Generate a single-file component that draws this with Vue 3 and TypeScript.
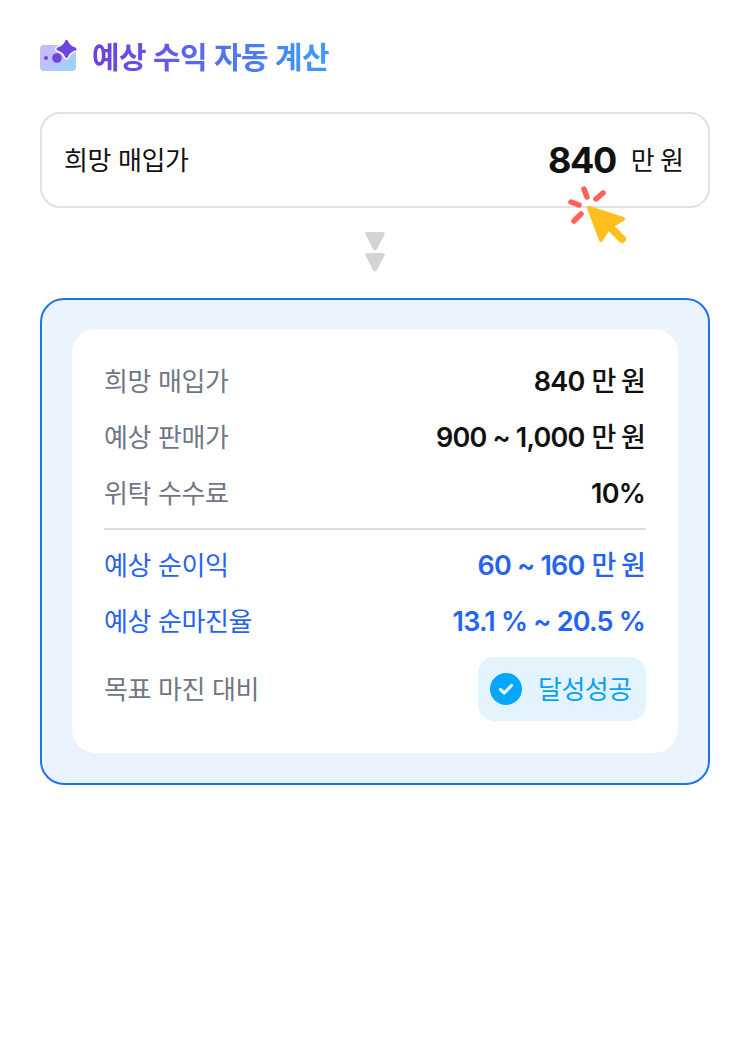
<script setup lang="ts">
interface Row { label: string; num: string; unit?: string }
const top: Row[] = [
  { label: '희망 매입가', num: '840', unit: '만 원' },
  { label: '예상 판매가', num: '900 ~ 1,000', unit: '만 원' },
  { label: '위탁 수수료', num: '10%' },
]
const bottom: Row[] = [
  { label: '예상 순이익', num: '60 ~ 160', unit: '만 원' },
  { label: '예상 순마진율', num: '13.1 % ~ 20.5 %' },
]
</script>

<template>
  <main class="page">
    <header class="title-row">
      <svg class="logo" width="40" height="36" viewBox="0 0 40 36">
        <defs>
          <linearGradient id="lg" x1="0" y1="0" x2="1" y2="1">
            <stop offset="0" stop-color="#cdb6fb" />
            <stop offset="0.55" stop-color="#b7c4fb" />
            <stop offset="1" stop-color="#93d8ff" />
          </linearGradient>
        </defs>
        <rect x="0" y="6" width="36" height="26" rx="4" fill="url(#lg)" />
        <circle cx="6" cy="19" r="2" fill="#6d45e0" />
        <circle cx="17" cy="19" r="4.800" fill="#6d45e0" />
        <path d="M26.500 2.500 Q28.500 8 35 10 Q28.500 12 26.500 17.500 Q24.500 12 18 10 Q24.500 8 26.500 2.500Z" fill="#fff" stroke="#fff" stroke-width="6" stroke-linejoin="round" />
        <path d="M26.500 2.500 Q28.500 8 35 10 Q28.500 12 26.500 17.500 Q24.500 12 18 10 Q24.500 8 26.500 2.500Z" fill="#6d45e0" stroke="#6d45e0" stroke-width="3" stroke-linejoin="round" />
      </svg>
      <h1 class="title">예상 수익 자동 계산</h1>
    </header>

    <section class="input-box">
      <span class="input-label">희망 매입가</span>
      <span class="input-value"><b>840</b><span class="unit">만 원</span></span>
      <svg class="cursor" width="64" height="66" viewBox="0 0 64 66">
        <g stroke="#ff6259" stroke-width="5.500" stroke-linecap="round" fill="none">
          <path d="M17 4 L20 12" />
          <path d="M36 8 L29 14" />
          <path d="M4 17 L12 20" />
          <path d="M14 29 L7 36" />
        </g>
        <path d="M22 23 L56 34 L42 42 L34 55 Z" fill="#ffbf1f" stroke="#ffbf1f" stroke-width="4" stroke-linejoin="round" />
        <path d="M44 43 L55 54" stroke="#ffbf1f" stroke-width="8" stroke-linecap="round" />
      </svg>
    </section>

    <div class="arrows">
      <svg width="20" height="19" viewBox="0 0 20 19"><path d="M2 0 H18 Q20.500 0 19.500 2.500 L12 17 Q10 20 8 17 L.5 2.500 Q-.5 0 2 0Z" fill="#d4d4d6" /></svg>
      <svg width="20" height="19" viewBox="0 0 20 19"><path d="M2 0 H18 Q20.500 0 19.500 2.500 L12 17 Q10 20 8 17 L.5 2.500 Q-.5 0 2 0Z" fill="#d4d4d6" /></svg>
    </div>

    <section class="panel">
      <div class="card">
        <div class="group">
          <div v-for="r in top" :key="r.label" class="row">
            <span class="label">{{ r.label }}</span>
            <span class="value">{{ r.num }}<span v-if="r.unit" class="value-unit">{{ r.unit }}</span></span>
          </div>
        </div>
        <div class="divider"></div>
        <div class="group">
          <div v-for="r in bottom" :key="r.label" class="row blue">
            <span class="label">{{ r.label }}</span>
            <span class="value">{{ r.num }}<span v-if="r.unit" class="value-unit">{{ r.unit }}</span></span>
          </div>
        </div>
        <div class="row goal">
          <span class="label">목표 마진 대비</span>
          <span class="badge">
            <svg width="32" height="32" viewBox="0 0 32 32">
              <circle cx="16" cy="16" r="16" fill="#06a5ff" />
              <path d="M10.500 16.500 L14.300 20 L21.500 12.500" fill="none" stroke="#e3f4ff" stroke-width="3.200" stroke-linecap="round" stroke-linejoin="round" />
            </svg>
            <span class="badge-text">달성성공</span>
          </span>
        </div>
      </div>
    </section>
  </main>
</template>

<style>
html, body { margin: 0; background: #fff; }
</style>

<style scoped>
.page {
  width: 750px;
  height: 1064px;
  box-sizing: border-box;
  padding: 39px 40px 0;
  font-family: Inter, "Noto Sans CJK KR", sans-serif;
  color: #111;
}
.title-row { display: flex; align-items: center; gap: 12px; height: 36px; }
.logo { flex: none; }
.title {
  margin: 0;
  font-size: 30px;
  line-height: 38px;
  font-weight: 600;
  letter-spacing: -0.6px;
  background: linear-gradient(90deg, #6f3fe0, #3d9bff);
  -webkit-background-clip: text;
  background-clip: text;
  color: transparent;
}
.input-box {
  position: relative;
  margin-top: 37px;
  height: 96px;
  box-sizing: border-box;
  border: 2px solid #e2e2e4;
  border-radius: 20px;
  display: flex;
  align-items: center;
  justify-content: space-between;
  padding: 0 24px 0 22px;
}
.input-label { font-size: 26px; letter-spacing: -0.4px; margin-bottom: 4px; }
.input-value { display: flex; align-items: center; gap: 15px; }
.input-value b { font-size: 36px; font-weight: 700; letter-spacing: -1.4px; }
.unit { font-size: 26px; word-spacing: -2px; margin-bottom: 4px; }
.cursor { position: absolute; left: 525px; top: 71px; }
.arrows { display: flex; flex-direction: column; align-items: center; gap: 2px; margin-top: 24px; height: 40px; }
.arrows svg { display: block; }
.panel {
  margin-top: 26px;
  box-sizing: border-box;
  height: 487px;
  border: 2px solid #1f73e8;
  border-radius: 24px;
  background: #ebf3fe;
  padding: 29px 30px;
}
.card {
  background: #fff;
  border-radius: 24px;
  height: 424px;
  box-sizing: border-box;
  padding: 30px 32px 24px;
}
.group { display: flex; flex-direction: column; gap: 16px; }
.row { display: flex; justify-content: space-between; align-items: center; height: 40px; }
.label { font-size: 26px; color: #6f7785; letter-spacing: -0.4px; }
.value {
  font-size: 27px;
  font-weight: 600;
  line-height: 36px;
  letter-spacing: -0.8px;
  color: #111;
  padding-right: 1px;
  margin-top: 6px;
}
.value-unit { font-weight: 500; line-height: 1; word-spacing: -1px; margin-left: 7px; }
.divider { height: 2px; background: #dcdcde; margin: 17px 0 13px; }
.blue .label, .blue .value { color: #2463f5; }
.goal { height: 64px; margin-top: 18px; }
.goal .label { margin-bottom: 4px; }
.badge {
  display: flex;
  align-items: center;
  gap: 16px;
  width: 168px;
  height: 64px;
  box-sizing: border-box;
  padding-left: 12px;
  background: #e3f4ff;
  border-radius: 16px;
}
.badge-text { font-size: 26px; color: #06a0fa; letter-spacing: -0.5px; margin-bottom: 4px; }
</style>
